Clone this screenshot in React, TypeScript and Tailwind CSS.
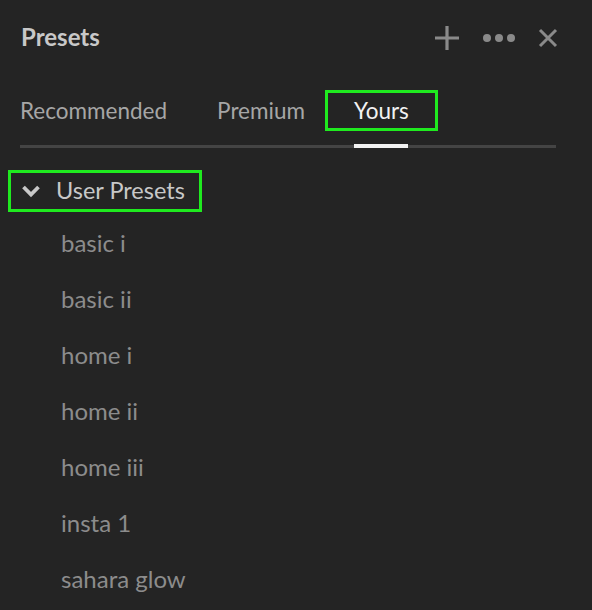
import React from "react";

const items = ["basic i", "basic ii", "home i", "home ii", "home iii", "insta 1", "sahara glow"];

export default function App() {
  return (
    <div
      className="w-[592px] h-[610px] bg-[#242424] overflow-hidden flex flex-col"
      style={{ fontFamily: 'Lato, "Open Sans", sans-serif' }}
    >
      <div className="mt-[19px] h-[36px] flex items-center justify-between pl-[21px] pr-[34px]">
        <div className="text-[24px] font-bold text-[#c8c8c8] leading-none">Presets</div>
        <div className="flex items-center mt-[2px]">
          <svg width="26" height="26" viewBox="0 0 26 26">
            <path d="M13 1v24M1 13h24" stroke="#8a8a8a" strokeWidth="3.2" />
          </svg>
          <svg width="34" height="10" viewBox="0 0 34 10" className="ml-[22px]">
            <circle cx="5" cy="5" r="4" fill="#8a8a8a" />
            <circle cx="17" cy="5" r="4" fill="#8a8a8a" />
            <circle cx="29" cy="5" r="4" fill="#8a8a8a" />
          </svg>
          <svg width="20" height="20" viewBox="0 0 20 20" className="ml-[22px]">
            <path d="M2 2l16 16M18 2L2 18" stroke="#8a8a8a" strokeWidth="3" />
          </svg>
        </div>
      </div>

      <div className="mt-[35px] flex items-center pl-[20px] h-[41px]">
        <div className="text-[22.5px] text-[#a6a6a6]">Recommended</div>
        <div className="ml-[50px] text-[22.5px] text-[#a6a6a6]">Premium</div>
        <div className="ml-[20px] w-[113px] h-[41px] border-[3px] border-[#1fea1f] flex items-center justify-center text-[22.5px] text-[#f2f2f2]">
          Yours
        </div>
      </div>

      <div className="mt-[14px] ml-[20px] mr-[36px] h-[3px] bg-[#444444] relative">
        <div className="absolute left-[334px] top-[-1px] w-[54px] h-[4px] bg-[#f2f2f2]" />
      </div>

      <div className="mt-[22px] ml-[8px] w-[194px] h-[42px] border-[3px] border-[#1fea1f] flex items-center pl-[10px]">
        <svg width="20" height="14" viewBox="0 0 20 14">
          <path d="M2.5 3l7.5 7.5L17.5 3" stroke="#c8c8c8" strokeWidth="3.8" fill="none" />
        </svg>
        <div className="ml-[15px] text-[23.5px] text-[#c8c8c8]">User Presets</div>
      </div>

      <div className="mt-[3px] flex flex-col">
        {items.map((t) => (
          <div key={t} className="h-[56px] flex items-center pl-[61px] text-[24px] text-[#8c8c8c]">
            {t}
          </div>
        ))}
      </div>
    </div>
  );
}
